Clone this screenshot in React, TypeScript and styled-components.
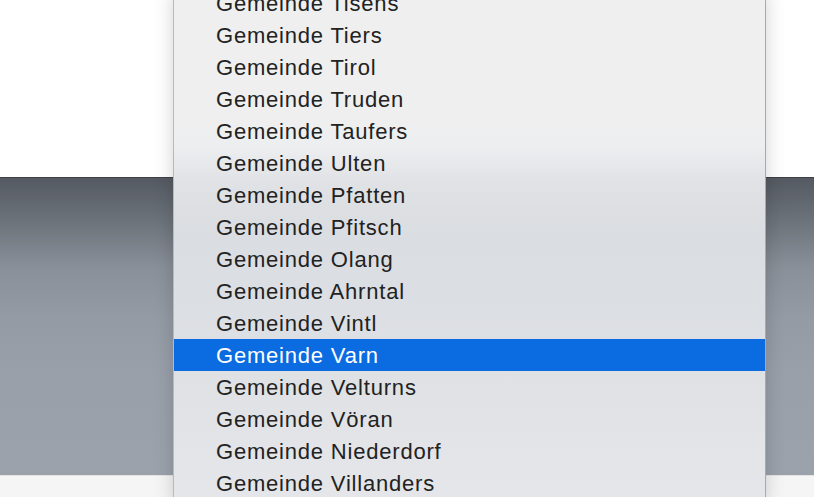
import React from "react";
import styled, { createGlobalStyle } from "styled-components";

const Global = createGlobalStyle`
  html, body { margin: 0; padding: 0; }
  body { width: 814px; height: 497px; overflow: hidden; background: #ffffff; }
`;

const Page = styled.div`
  position: relative;
  width: 814px;
  height: 497px;
  display: flex;
  flex-direction: column;
  overflow: hidden;
  font-family: "Liberation Sans", Arial, sans-serif;
`;

const TopArea = styled.div`
  height: 177px;
  background: #ffffff;
  flex: none;
`;

const Band = styled.div`
  height: 298px;
  flex: none;
  border-top: 1px solid #3c3f44;
  box-sizing: border-box;
  background: linear-gradient(
    to bottom,
    #555a62 0px,
    #6b7179 40px,
    #8a9099 90px,
    #959ba5 140px,
    #9aa0aa 200px,
    #9ca2ac 298px
  );
`;

const Footer = styled.div`
  flex: 1;
  border-top: 1px solid #e4e4e4;
  background: #f5f5f5;
`;

const Menu = styled.ul`
  position: absolute;
  left: 173px;
  top: -13px;
  width: 593px;
  margin: 0;
  padding: 0;
  list-style: none;
  box-sizing: border-box;
  border-left: 1px solid #b9b9b9;
  border-right: 1px solid #a9a9ab;
  box-shadow: 0 6px 18px rgba(0, 0, 0, 0.18);
  background: linear-gradient(
    to bottom,
    #efefef 0px,
    #efefef 135px,
    #eceef0 160px,
    #e0e2e5 195px,
    #dadde1 250px,
    #dcdfe3 330px,
    #e2e4e7 450px,
    #e4e6e9 510px
  );
`;

const Item = styled.li<{ $selected?: boolean }>`
  height: 32px;
  box-sizing: border-box;
  padding: 2px 0 0 42px;
  display: flex;
  align-items: center;
  font-size: 22px;
  letter-spacing: 0.8px;
  color: ${(p) => (p.$selected ? "#ffffff" : "#222222")};
  background: ${(p) => (p.$selected ? "#0b6be0" : "transparent")};
  white-space: nowrap;
`;

const items = [
  "Gemeinde Tisens",
  "Gemeinde Tiers",
  "Gemeinde Tirol",
  "Gemeinde Truden",
  "Gemeinde Taufers",
  "Gemeinde Ulten",
  "Gemeinde Pfatten",
  "Gemeinde Pfitsch",
  "Gemeinde Olang",
  "Gemeinde Ahrntal",
  "Gemeinde Vintl",
  "Gemeinde Varn",
  "Gemeinde Velturns",
  "Gemeinde Vöran",
  "Gemeinde Niederdorf",
  "Gemeinde Villanders",
];

export default function App() {
  return (
    <>
      <Global />
      <Page>
        <TopArea />
        <Band />
        <Footer />
        <Menu>
          {items.map((name) => (
            <Item key={name} $selected={name === "Gemeinde Varn"}>
              {name}
            </Item>
          ))}
        </Menu>
      </Page>
    </>
  );
}
